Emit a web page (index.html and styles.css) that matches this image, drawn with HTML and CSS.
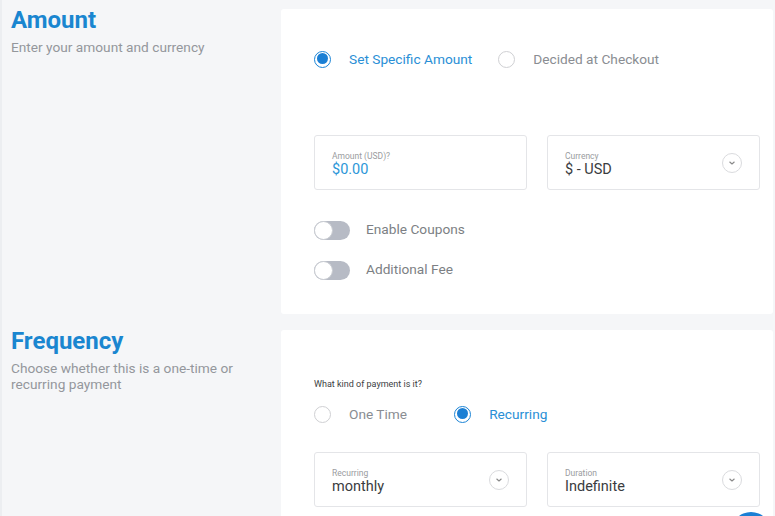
FILE: index.html
```html
<!DOCTYPE html>
<html>
<head>
<meta charset="utf-8">
<link rel="stylesheet" href="styles.css">
</head>
<body>
<div class="page">
  <section class="row row-amount">
    <div class="intro">
      <h2 class="title">Amount</h2>
      <p class="desc">Enter your amount and currency</p>
    </div>
    <div class="card card-amount">
      <div class="radios radios-top">
        <label class="radio-item on"><span class="radio"></span><span class="rlabel">Set Specific Amount</span></label>
        <label class="radio-item"><span class="radio"></span><span class="rlabel">Decided at Checkout</span></label>
      </div>
      <div class="fields">
        <div class="field">
          <div class="ftext">
            <span class="flabel">Amount (USD)?</span>
            <span class="fvalue blue">$0.00</span>
          </div>
        </div>
        <div class="field">
          <div class="ftext">
            <span class="flabel">Currency</span>
            <span class="fvalue">$ - USD</span>
          </div>
          <span class="chev"><svg width="8" height="6" viewBox="0 0 8 6"><path d="M1.8 2 L4 4 L6.2 2" fill="none" stroke="#888" stroke-width="1.1" stroke-linecap="round" stroke-linejoin="round"/></svg></span>
        </div>
      </div>
      <div class="toggles">
        <div class="toggle-row"><span class="toggle"><span class="knob"></span></span><span class="tlabel">Enable Coupons</span></div>
        <div class="toggle-row"><span class="toggle"><span class="knob"></span></span><span class="tlabel">Additional Fee</span></div>
      </div>
    </div>
  </section>
  <section class="row row-freq">
    <div class="intro">
      <h2 class="title">Frequency</h2>
      <p class="desc">Choose whether this is a one-time or recurring payment</p>
    </div>
    <div class="card card-freq">
      <p class="qlabel">What kind of payment is it?</p>
      <div class="radios radios-freq">
        <label class="radio-item"><span class="radio"></span><span class="rlabel">One Time</span></label>
        <label class="radio-item on"><span class="radio"></span><span class="rlabel">Recurring</span></label>
      </div>
      <div class="fields fields-freq">
        <div class="field">
          <div class="ftext">
            <span class="flabel">Recurring</span>
            <span class="fvalue">monthly</span>
          </div>
          <span class="chev"><svg width="8" height="6" viewBox="0 0 8 6"><path d="M1.8 2 L4 4 L6.2 2" fill="none" stroke="#888" stroke-width="1.1" stroke-linecap="round" stroke-linejoin="round"/></svg></span>
        </div>
        <div class="field">
          <div class="ftext">
            <span class="flabel">Duration</span>
            <span class="fvalue">Indefinite</span>
          </div>
          <span class="chev"><svg width="8" height="6" viewBox="0 0 8 6"><path d="M1.8 2 L4 4 L6.2 2" fill="none" stroke="#888" stroke-width="1.1" stroke-linecap="round" stroke-linejoin="round"/></svg></span>
        </div>
      </div>
    </div>
  </section>
</div>
<span class="fab"></span>
</body>
</html>
```
FILE: styles.css
```css
html, body {
  margin: 0;
  padding: 0;
  height: 100%;
  overflow: hidden;
}
body {
  background: #f5f6f8;
  font-family: Roboto, "Liberation Sans", Arial, sans-serif;
  color: #777;
  position: relative;
  border-left: 2px solid #eceef1;
  box-sizing: border-box;
}
.page {
  display: flex;
  flex-direction: column;
  gap: 16px;
}
.row {
  display: grid;
  grid-template-columns: 279px 492px;
}
.intro {
  padding-left: 9px;
}
.title {
  margin: 6px 0 0;
  font-size: 24px;
  line-height: 28px;
  font-weight: 700;
  color: #1a86d0;
}
.desc {
  margin: 5px 0 0;
  font-size: 13.7px;
  line-height: 16px;
  color: #94979c;
  width: 250px;
}
.row-freq .title { margin-top: -3px; }
.row-freq .desc { margin-top: 5px; }
.card {
  background: #fff;
  border-radius: 3px;
  box-sizing: border-box;
  padding: 0 13px 0 33px;
}
.card-amount {
  margin-top: 9px;
  height: 305px;
  padding-top: 41px;
}
.radios {
  display: flex;
  align-items: center;
  height: 18px;
}
.radios-top { gap: 26px; }
.radio-item {
  display: flex;
  align-items: center;
  gap: 18px;
  font-size: 13.7px;
  color: #8a8d92;
}
.radio-item.on { color: #2a8fd6; }
.radio {
  width: 17px;
  height: 17px;
  box-sizing: border-box;
  border-radius: 50%;
  border: 1.5px solid #cfd0d3;
  background: #fff;
  position: relative;
}
.radio-item.on .radio {
  border-color: #1b84d6;
}
.radio-item.on .radio::after {
  content: "";
  position: absolute;
  left: 1.5px;
  top: 1.5px;
  width: 11px;
  height: 11px;
  border-radius: 50%;
  background: #1b7fd4;
}
.fields {
  display: grid;
  grid-template-columns: 213px 213px;
  gap: 20px;
  margin-top: 67px;
}
.field {
  height: 55px;
  box-sizing: border-box;
  border: 1px solid #e4e5e8;
  border-radius: 3px;
  display: flex;
  align-items: center;
  justify-content: space-between;
  padding: 0 17px 0 17px;
}
.ftext {
  display: flex;
  flex-direction: column;
  margin-top: 4px;
}
.flabel {
  font-size: 8.5px;
  line-height: 10px;
  color: #9a9ca0;
}
.fvalue {
  font-size: 14.5px;
  line-height: 17px;
  color: #3a3c40;
  font-weight: 400;
}
.fvalue.blue { color: #2d97d8; }
.chev {
  width: 20px;
  height: 20px;
  box-sizing: border-box;
  border: 1px solid #dadbde;
  border-radius: 50%;
  display: flex;
  align-items: center;
  justify-content: center;
}
.toggles {
  display: flex;
  flex-direction: column;
  gap: 21px;
  margin-top: 31px;
}
.toggle-row {
  display: flex;
  align-items: center;
  gap: 16px;
  height: 19px;
}
.toggle {
  width: 36px;
  height: 19px;
  border-radius: 10px;
  background: #b7bbc5;
  position: relative;
}
.knob {
  position: absolute;
  left: 0;
  top: 0;
  width: 19px;
  height: 19px;
  box-sizing: border-box;
  border-radius: 50%;
  background: #fff;
  border: 1px solid #c9ccd2;
}
.tlabel {
  font-size: 13.7px;
  color: #7c7f84;
  margin-top: -3px;
}
.card-freq {
  height: 260px;
  padding-top: 48px;
}
.qlabel {
  margin: 0;
  font-size: 9px;
  line-height: 12px;
  color: #3c3e42;
}
.radios-freq {
  margin-top: 15px;
  gap: 47px;
}
.fields-freq {
  margin-top: 29px;
}
.fab {
  position: absolute;
  right: 4px;
  bottom: -36px;
  width: 40px;
  height: 40px;
  border-radius: 50%;
  background: #1b7fd4;
}
```
